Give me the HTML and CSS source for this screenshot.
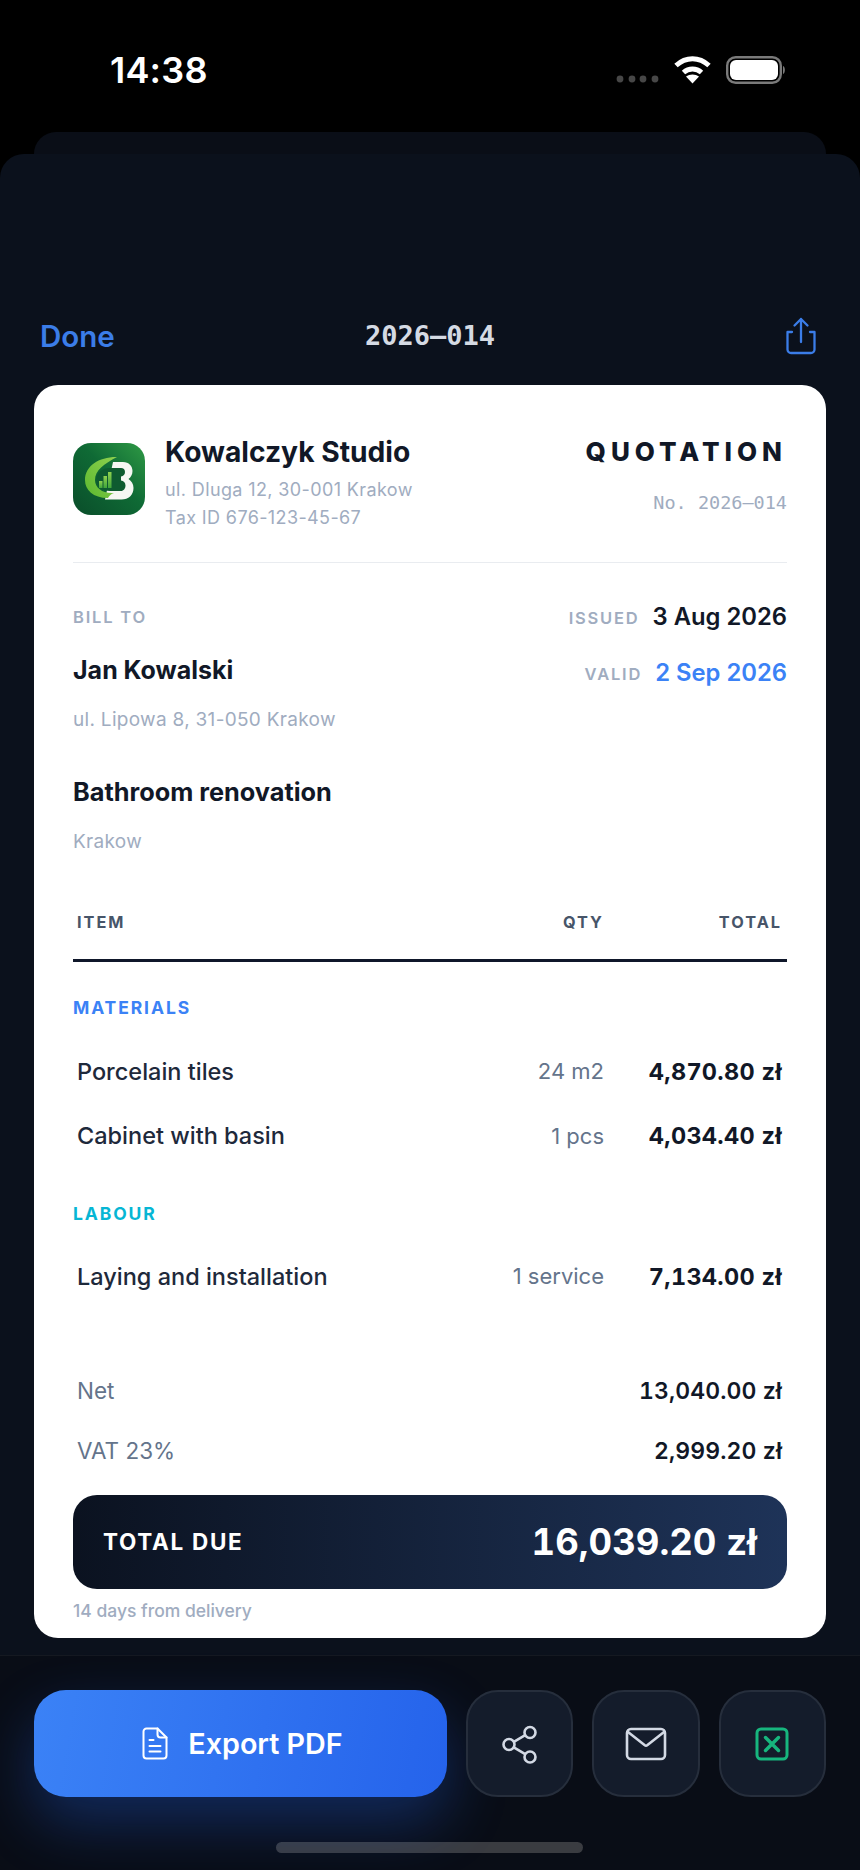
FILE: index.html
```html
<!DOCTYPE html>
<html lang="en">
<head>
<meta charset="utf-8">
<title>Quotation 2026–014</title>
<link rel="stylesheet" href="styles.css">
</head>
<body>
<div class="phone">
  <header class="status">
    <span class="time">14:38</span>
    <svg class="status-icons" width="172" height="40" viewBox="616 50 172 40" aria-hidden="true">
      <g fill="#474747"><circle cx="620" cy="79" r="3.4"/><circle cx="632" cy="79" r="3.4"/><circle cx="643" cy="79" r="3.4"/><circle cx="655" cy="79" r="3.4"/></g>
      <g fill="none" stroke="#fff" stroke-width="5">
        <path d="M676 65.5c10-9 23-9 33 0"/>
        <path d="M683.500 72.500c5.200-4.700 12.800-4.700 18 0"/>
      </g>
      <path d="M692.500 83.500l-6.500-7c3.700-2.800 9.300-2.800 13 0z" fill="#fff"/>
      <rect x="727.200" y="57.200" width="53.600" height="25.600" rx="8.500" fill="none" stroke="#7a7a7a" stroke-width="2.400"/>
      <rect x="730" y="60" width="48" height="20" rx="6" fill="#fff"/>
      <path d="M783 66c2.500.8 2.500 7.200 0 8z" fill="#7a7a7a"/>
    </svg>
  </header>
  <div class="back-sheet"></div>
  <main class="sheet">
    <nav class="nav">
      <span class="done">Done</span>
      <span class="nav-title">2026–014</span>
      <svg class="nav-share" width="32" height="38" viewBox="0 0 32 38" fill="none" stroke="#3b7de8" stroke-width="2.300" stroke-linecap="round" stroke-linejoin="round" aria-hidden="true">
        <path d="M16 2v23M9.500 8.500 16 2l6.500 6.500"/>
        <path d="M7 15H2.500v17.500a3.500 3.500 0 0 0 3.500 3.500h20a3.500 3.500 0 0 0 3.500-3.500V15H25"/>
      </svg>
    </nav>

    <article class="card">
      <section class="head">
        <div class="brand">
          <svg class="logo" width="72" height="72" viewBox="0 0 72 72" aria-hidden="true">
            <defs>
              <linearGradient id="lg-bg" x1="1" y1="0" x2="0" y2="1">
                <stop offset="0" stop-color="#2f9a45"/><stop offset=".45" stop-color="#0f6a35"/><stop offset="1" stop-color="#0a4d2a"/>
              </linearGradient>
              <linearGradient id="lg-c" x1="1" y1="0" x2="0" y2="1">
                <stop offset="0" stop-color="#8fd14f"/><stop offset="1" stop-color="#5cb82f"/>
              </linearGradient>
              <linearGradient id="lg-bar" x1="0" y1="1" x2="0" y2="0">
                <stop offset="0" stop-color="#3fa53a"/><stop offset="1" stop-color="#8fd14f"/>
              </linearGradient>
            </defs>
            <rect width="72" height="72" rx="18" fill="url(#lg-bg)"/>
            <path d="M40 19h10c6 0 9.500 4 9.500 9 0 3.500-1.500 6-4 8 3 2 5 5 5 9 0 7-5 11.500-12 11.500H32z" fill="#f5f7f3"/>
            <path d="M43 14C26 14 12 23 12 37c0 10 8 18 23 18 1.500-2.500 3-4 6-5-11 1-19-5-19-13 0-10 9-16 22-23z" fill="url(#lg-c)"/>
            <path d="M37 25h11c2.500 0 4 1.500 4 4s-1.500 4-4 4.500v4c2.500.5 4.500 2 4.500 5s-2 5.500-4.500 5.500H37c-7.500 0-13.500-4.500-13.500-11.500S29.500 25 37 25z" fill="#0e5b30"/>
            <g fill="url(#lg-bar)"><rect x="26" y="38" width="3.500" height="7"/><rect x="30.500" y="33" width="3.500" height="12"/><rect x="35" y="29" width="3.500" height="16"/></g>
          </svg>
          <div class="brand-text">
            <h1 class="company">Kowalczyk Studio</h1>
            <p class="company-line">ul. Dluga 12, 30-001 Krakow</p>
            <p class="company-line">Tax ID 676-123-45-67</p>
          </div>
        </div>
        <div class="doc">
          <div class="doc-title">QUOTATION</div>
          <div class="doc-no">No. 2026–014</div>
        </div>
      </section>

      <section class="meta">
        <div class="client">
          <div class="bill-label">BILL TO</div>
          <div class="client-name">Jan Kowalski</div>
          <div class="client-line">ul. Lipowa 8, 31-050 Krakow</div>
          <div class="project-name">Bathroom renovation</div>
          <div class="client-line">Krakow</div>
        </div>
        <div class="dates">
          <div class="date-row"><span class="date-label">ISSUED</span><span class="date-value">3 Aug 2026</span></div>
          <div class="date-row date-row-valid"><span class="date-label">VALID</span><span class="date-value date-blue">2 Sep 2026</span></div>
        </div>
      </section>

      <div class="row table-head"><span>ITEM</span><span>QTY</span><span>TOTAL</span></div>

      <h2 class="group group-blue">MATERIALS</h2>
      <div class="row item"><span class="item-name">Porcelain tiles</span><span class="item-qty">24 m2</span><span class="item-total">4,870.80 zł</span></div>
      <div class="row item"><span class="item-name">Cabinet with basin</span><span class="item-qty">1 pcs</span><span class="item-total">4,034.40 zł</span></div>

      <h2 class="group group-cyan">LABOUR</h2>
      <div class="row item"><span class="item-name">Laying and installation</span><span class="item-qty">1 service</span><span class="item-total">7,134.00 zł</span></div>

      <div class="sums">
        <div class="sum"><span>Net</span><span class="sum-value">13,040.00 zł</span></div>
        <div class="sum"><span>VAT 23%</span><span class="sum-value">2,999.20 zł</span></div>
      </div>

      <div class="due"><span class="due-label">TOTAL DUE</span><span class="due-value">16,039.20 zł</span></div>
      <p class="terms">14 days from delivery</p>
    </article>

    <footer class="bar">
      <div class="actions">
        <button class="export" type="button">
          <svg width="26" height="33" viewBox="0 0 26 33" fill="none" stroke="#fff" stroke-width="2" stroke-linecap="round" stroke-linejoin="round" aria-hidden="true">
            <path d="M15.500 1.500H4.500a3 3 0 0 0-3 3v24a3 3 0 0 0 3 3h17a3 3 0 0 0 3-3V10.500z"/>
            <path d="M15.500 1.500v6a3 3 0 0 0 3 3h6"/>
            <path d="M7.500 13h4M7.500 19h11M7.500 24.500h11"/>
          </svg>
          <span>Export PDF</span>
        </button>
        <button class="icon-btn" type="button" aria-label="Share">
          <svg width="48" height="48" viewBox="0 0 48 48" fill="none" stroke="#d3d9e4" stroke-width="2.600" aria-hidden="true">
            <circle cx="34" cy="12.500" r="5.500"/><circle cx="13" cy="24.500" r="5.500"/><circle cx="34" cy="37" r="5.500"/>
            <path d="M17.800 21.800l11.400-6.600M17.800 27.300l11.400 6.900"/>
          </svg>
        </button>
        <button class="icon-btn" type="button" aria-label="Mail">
          <svg width="48" height="48" viewBox="0 0 48 48" fill="none" stroke="#d3d9e4" stroke-width="2.600" stroke-linecap="round" stroke-linejoin="round" aria-hidden="true">
            <rect x="5" y="9" width="38" height="30" rx="4"/>
            <path d="M6 12l16.500 13a2.500 2.500 0 0 0 3 0L42 12"/>
          </svg>
        </button>
        <button class="icon-btn" type="button" aria-label="Excel">
          <svg width="48" height="48" viewBox="0 0 48 48" fill="none" stroke="#17b67e" stroke-width="3" stroke-linecap="round" stroke-linejoin="round" aria-hidden="true">
            <rect x="9" y="9" width="30" height="30" rx="4"/>
            <path d="M17.500 17.500l13 13M30.500 17.500l-13 13" stroke-width="3.500"/>
          </svg>
        </button>
      </div>
      <div class="home"></div>
    </footer>
  </main>
</div>
</body>
</html>
```

FILE: styles.css
```css
* { box-sizing: border-box; }
html, body { margin: 0; padding: 0; background: #000; }
body { font-family: Inter, "Liberation Sans", sans-serif; }
h1, h2, p { margin: 0; font: inherit; }

.phone { width: 860px; height: 1870px; overflow: hidden; display: flex; flex-direction: column; }

.status { height: 132px; flex: none; display: flex; justify-content: space-between; align-items: flex-start; padding: 50px 72px 0 110px; color: #fff; }
.time { font-size: 36px; line-height: 40px; font-weight: 600; letter-spacing: .2px; }

.back-sheet { height: 22px; flex: none; margin: 0 34px; background: #0a0e17; border-radius: 22px 22px 0 0; }

.sheet { flex: 1; background: #0b111c; border-radius: 24px 24px 0 0; padding-top: 152px; display: flex; flex-direction: column; }

.nav { height: 60px; margin: 0 34px 19px 40px; display: flex; align-items: center; justify-content: space-between; position: relative; }
.done { font-size: 29.500px; font-weight: 600; color: #3b7de8; }
.nav-title { font-family: "DejaVu Sans Mono", "Liberation Mono", monospace; font-size: 27px; font-weight: 700; color: #d5dae3; position: absolute; left: 325px; top: 12px; line-height: 36px; }
.nav-share { margin-right: 9px; }

.card { margin: 0 34px; height: 1253px; background: #fff; border-radius: 24px; padding: 51px 39px 0; color: #111827; }

.head { display: flex; justify-content: space-between; align-items: flex-start; padding-bottom: 30px; border-bottom: 1px solid #e9ecf0; }
.brand { display: flex; gap: 20px; align-items: flex-start; }
.logo { margin-top: 7px; flex: none; }
.company { font-size: 28.200px; line-height: 32px; font-weight: 700; color: #111827; margin-bottom: 8px; }
.company-line { font-size: 18px; line-height: 28px; color: #a0acc0; letter-spacing: .38px; }
.doc { text-align: right; }
.doc-title { font-size: 26px; line-height: 32px; font-weight: 800; letter-spacing: 5px; color: #111827; }
.doc-no { font-family: "DejaVu Sans Mono", "Liberation Mono", monospace; font-size: 18.500px; line-height: 24px; font-weight: 500; color: #a0acc0; margin-top: 23px; }

.meta { display: flex; justify-content: space-between; padding-top: 44px; }
.bill-label { font-size: 16.500px; line-height: 20px; font-weight: 600; letter-spacing: 1.8px; color: #a0acc0; }
.client-name { font-size: 25px; line-height: 32px; font-weight: 700; margin-top: 27px; }
.client-line { font-size: 19px; line-height: 24px; color: #a0acc0; margin-top: 22px; letter-spacing: .3px; }
.project-name { font-size: 25.300px; line-height: 32px; font-weight: 700; margin-top: 44px; }

.dates { display: flex; flex-direction: column; align-items: flex-end; }
.date-row { display: flex; align-items: center; gap: 13px; height: 32px; margin-top: -7px; }
.date-row-valid { margin-top: 24px; }
.date-label { font-size: 16.500px; font-weight: 600; letter-spacing: 1.8px; color: #a0acc0; padding-top: 4px; }
.date-value { font-size: 23.800px; font-weight: 600; color: #111827; }
.date-blue { color: #3b82f6; }

.row { display: grid; grid-template-columns: 1fr auto 178px; align-items: center; padding: 0 5px 0 4px; }
.row > :last-child { text-align: right; }

.table-head { margin-top: 58px; padding-bottom: 27px; line-height: 20px; font-size: 16.300px; font-weight: 700; letter-spacing: 2px; color: #475569; border-bottom: 3px solid #0f172a; }

.group { font-size: 17.500px; line-height: 20px; font-weight: 700; letter-spacing: 1.9px; }
.group-blue { color: #3b82f6; margin-top: 36px; margin-bottom: 21px; }
.group-cyan { color: #06b6d4; margin-top: 36px; margin-bottom: 20px; }

.item { height: 64.500px; }
.item-name { font-size: 23.500px; font-weight: 500; color: #1e293b; }
.item-qty { font-size: 22px; color: #64748b; }
.item-total { font-size: 23.500px; font-weight: 700; letter-spacing: .3px; color: #111827; font-variant-numeric: tabular-nums; }

.sums { margin-top: 52px; }
.sum { height: 60px; padding: 0 5px 0 4px; display: flex; justify-content: space-between; align-items: center; font-size: 22.500px; color: #64748b; }
.sum-value { font-size: 23px; font-weight: 600; letter-spacing: .1px; color: #111827; font-variant-numeric: tabular-nums; }

.due { margin-top: 14px; height: 94px; border-radius: 24px; padding: 0 30px; display: flex; justify-content: space-between; align-items: center; color: #fff; background: linear-gradient(90deg, #0b1220, #1e3358); }
.due-label { font-size: 22.500px; font-weight: 700; letter-spacing: 1.7px; }
.due-value { font-size: 36.500px; font-weight: 700; font-variant-numeric: tabular-nums; }
.terms { font-size: 17.500px; line-height: 20px; font-weight: 500; color: #a0acc0; margin-top: 12px; }

.bar { flex: 1; margin-top: 17px; border-top: 1px solid rgba(255, 255, 255, .05); background: #090d16; padding-top: 34px; }
.actions { display: flex; gap: 19px; margin: 0 34px; }
.export { flex: none; width: 413px; height: 107px; border: 0; border-radius: 32px; padding: 0 0 0 4px; display: flex; align-items: center; justify-content: center; gap: 20px; color: #fff; font: 600 28.700px Inter, "Liberation Sans", sans-serif; background: linear-gradient(100deg, #3b82f6, #2563eb); box-shadow: 0 26px 60px rgba(37, 99, 235, .33); }
.icon-btn { flex: 1; height: 107px; border: 2px solid #262e3c; border-radius: 32px; background: #141c2b; display: flex; align-items: center; justify-content: center; padding: 0; }
.home { width: 307px; height: 11px; margin: 45px auto 0 276px; background: #3a3c41; border-radius: 6px; }
```
